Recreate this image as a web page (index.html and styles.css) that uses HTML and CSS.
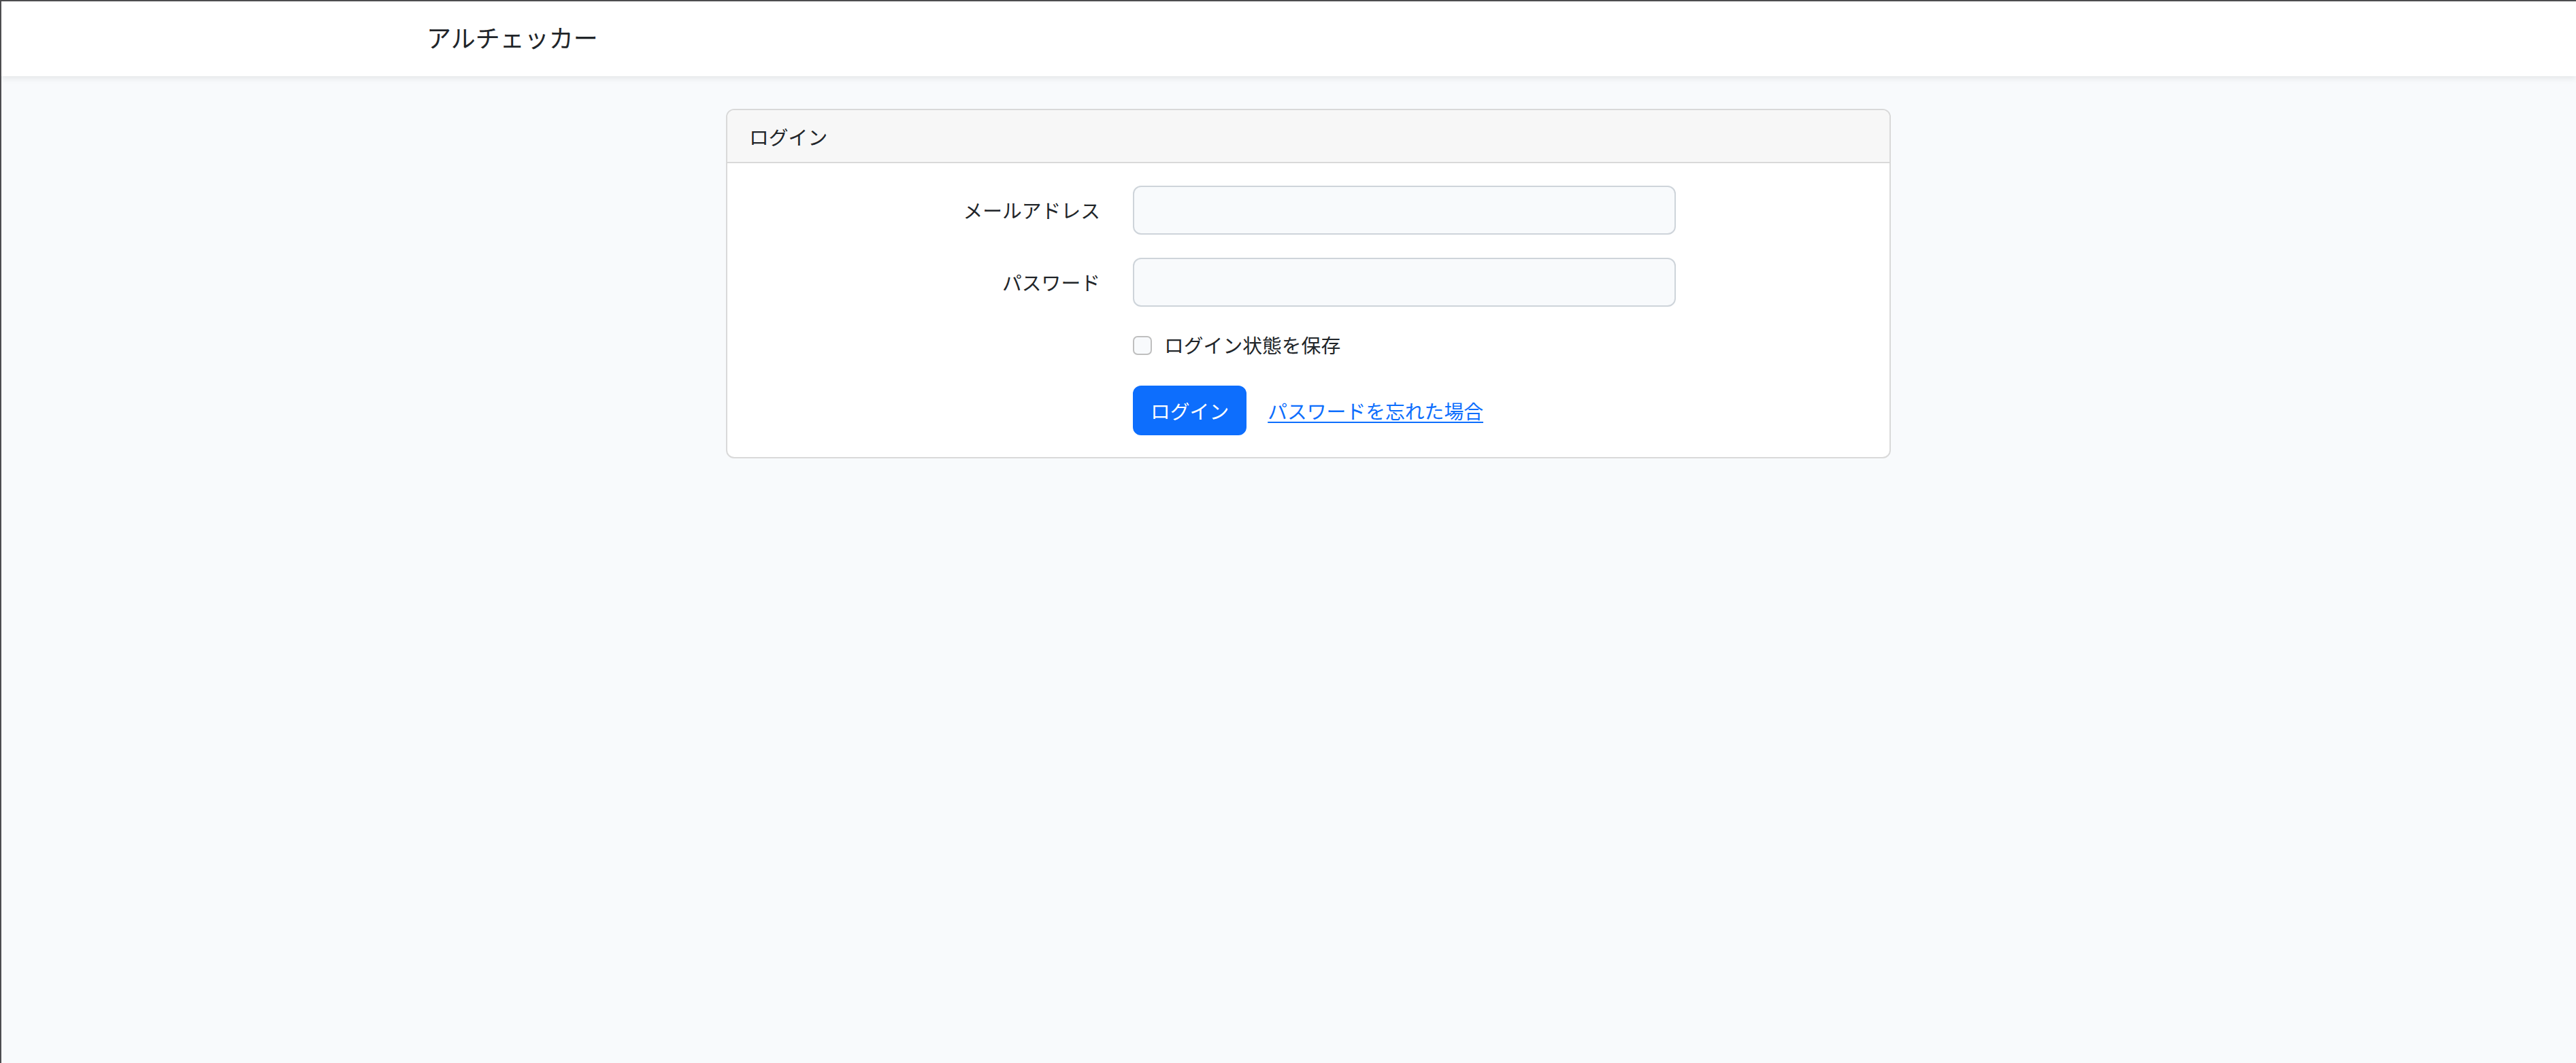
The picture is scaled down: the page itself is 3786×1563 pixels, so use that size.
FILE: index.html
```html
<!DOCTYPE html>
<html lang="ja">
<head>
<meta charset="utf-8">
<title>ログイン - アルチェッカー</title>
<link rel="stylesheet" href="styles.css">
</head>
<body>
<div class="app">
  <nav class="navbar">
    <div class="container">
      <a class="brand" href="#">アルチェッカー</a>
    </div>
  </nav>
  <main class="main">
    <div class="container">
      <div class="card">
        <div class="card-header">ログイン</div>
        <div class="card-body">
          <form class="form">
            <div class="row">
              <label class="col-label" for="email">メールアドレス</label>
              <div class="col-input"><input class="form-control" id="email" type="email"></div>
            </div>
            <div class="row">
              <label class="col-label" for="password">パスワード</label>
              <div class="col-input"><input class="form-control" id="password" type="password"></div>
            </div>
            <div class="row row-check">
              <div class="col-offset">
                <label class="form-check"><span class="check-box"></span><span class="check-label">ログイン状態を保存</span></label>
              </div>
            </div>
            <div class="row row-actions">
              <div class="col-offset actions">
                <button class="btn" type="button">ログイン</button>
                <a class="link" href="#">パスワードを忘れた場合</a>
              </div>
            </div>
          </form>
        </div>
      </div>
    </div>
  </main>
</div>
</body>
</html>
```

FILE: styles.css
```css
* { box-sizing: border-box; }

html, body {
  margin: 0;
  padding: 0;
}

body {
  font-family: "Noto Sans CJK JP", "Noto Sans", sans-serif;
  font-size: 28.8px;
  line-height: 1.5;
  color: #212529;
  background: #f8fafc;
  border-top: 2px solid #4d4d50;
  border-left: 2px solid #4d4d50;
  min-height: 100vh;
}

.app {
  min-height: calc(100vh - 2px);
}

.navbar {
  background: #ffffff;
  height: 110px;
  display: flex;
  align-items: center;
  padding-left: 58px;
  box-shadow: 0 4px 8px rgba(0, 0, 0, 0.075);
  position: relative;
}

.container {
  width: 2640px;
  margin: 0 auto;
  padding: 0 24px;
}

.brand {
  display: inline-block;
  font-size: 36px;
  line-height: 54px;
  color: #212529;
  text-decoration: none;
  margin-top: -6px;
}

.main {
  padding: 48px 0 0 58px;
}

.card {
  width: 1712px;
  margin: 0 auto;
  background: #ffffff;
  border: 2px solid #d9d9d9;
  border-radius: 12px;
  overflow: hidden;
}

.card-header {
  background: #f7f7f7;
  border-bottom: 2px solid #d9d9d9;
  padding: 17px 32px 16px;
  line-height: 43.2px;
}

.card-body {
  padding: 33px 32px 32px;
}

.row {
  display: flex;
  margin: 0 -24px 34px;
}

.row-actions { margin-bottom: 0; }

.col-label {
  flex: 0 0 564px;
  padding: 14px 24px;
  text-align: right;
  line-height: 43.2px;
}

.col-input {
  flex: 0 0 846px;
  padding: 0 24px;
}

.col-offset {
  margin-left: 564px;
  flex: 0 0 846px;
  padding: 0 24px;
}

.form-control {
  display: block;
  width: 100%;
  height: 72px;
  padding: 12px 24px;
  font: inherit;
  color: #212529;
  background: #f8fafc;
  border: 2px solid #ced4da;
  border-radius: 12px;
}

.form-check {
  display: flex;
  align-items: flex-start;
  min-height: 48px;
  line-height: 43.2px;
}

.check-box {
  flex: 0 0 28px;
  width: 28px;
  height: 28px;
  margin-top: 9px;
  margin-right: 18px;
  background: #f8fafc;
  border: 2px solid #bfbfbf;
  border-radius: 7px;
}

.actions {
  display: flex;
  align-items: center;
}

.btn {
  font: inherit;
  line-height: 43.2px;
  color: #ffffff;
  background: #0d6efd;
  border: 2px solid #0d6efd;
  border-radius: 12px;
  padding: 13px 24px;
}

.link {
  margin-left: 31px;
  color: #0d6efd;
  text-decoration: underline;
  text-underline-offset: 4px;
  text-decoration-thickness: 2px;
}
```
